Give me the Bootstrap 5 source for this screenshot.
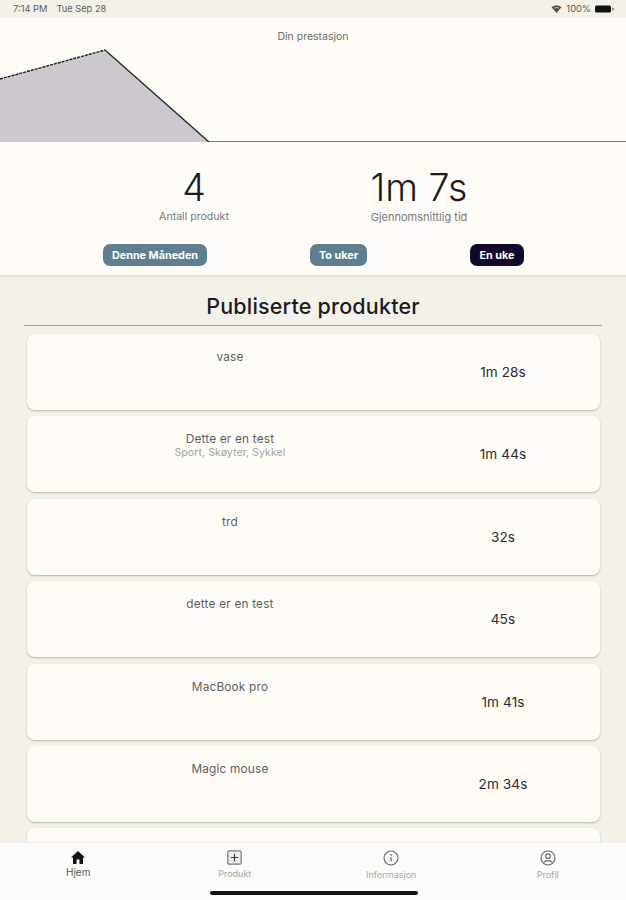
<!DOCTYPE html>
<html lang="no"><head><meta charset="utf-8"><title>Hjem</title>
<link href="https://cdn.jsdelivr.net/npm/bootstrap@5.3.0/dist/css/bootstrap.min.css" rel="stylesheet">
<style>
html,body{height:900px;overflow:hidden}
body{background:#f4f1e9;font-family:Inter,"Liberation Sans",sans-serif;color:#1c1b1f}
.app{height:900px}
.statusbar{height:18px;background:#f4f1e9;padding:0 12px 0 13px;font-size:9.3px;color:#5a5a58}
.statusgap{margin-left:9px}
.hero{background:#fffcf8;height:258px;border-bottom:1px solid #d9d6cf;box-shadow:0 1px 2px rgba(0,0,0,.08)}
.charttitle{font-size:10.5px;color:#6b6a68;text-align:center;position:absolute;left:0;right:0;top:11px}
.chartbox{height:124px}
.chartbox svg{display:block}
.stats{padding-top:28px;height:100px}
.statcol{width:210px;text-align:center}
.statnum{font-size:37.5px;line-height:36px;font-weight:300;color:#1c1b1f}
.statlab{font-size:10.6px;line-height:14px;color:#77767a;margin-top:4px}
.statwide{font-size:11px}
.filters{padding:0 102px 0 103px;margin-top:2px}
.pill{font-size:10.8px;font-weight:700;line-height:21px;height:22px;border-radius:7px;color:#fff;background:#5f7f90;padding:0;border:0;text-align:center}
.pw1{width:104px}.pw2{width:57px}.pw3{width:54px}
.pill.active{background:#15062b}
.heading{font-size:21.5px;font-weight:500;letter-spacing:.2px;text-align:center;line-height:28px;margin:16px 24px 0;padding-bottom:3px;border-bottom:1px solid #a39d8e;height:34px;color:#1c1b1f}
.listing{padding:8px 26px 0 27px;gap:6.4px;overflow:hidden;flex:1 1 0;min-height:0}
.prod{flex:0 0 76px;background:#fffcf8;border-radius:8px;box-shadow:0 1px 2px rgba(70,65,50,.35);padding-top:16px}
.prodmain{width:406px;text-align:center}
.prodname{font-size:11.8px;line-height:14px;color:#5f5e5c;letter-spacing:.2px}
.prodsub{font-size:10.5px;line-height:12px;color:#a3a2a0;letter-spacing:.1px;margin-top:1px}
.prodtime{width:140px;text-align:center;font-size:13.6px;color:#2b2a2c;letter-spacing:.1px;margin-top:15px;line-height:14px}
.tabbar{height:58px;background:#fbfbfa;flex:0 0 58px;position:relative;border-top:1px solid #f0efec}
.tab{width:156.5px;text-align:center;font-size:9px;color:#a8a7a6;padding-top:7px;line-height:12px}
.tab svg{display:block;margin:0 auto 3px}
.tab.on{color:#55545a;font-size:10px}
.tab.on svg{margin-bottom:1px}
.homebar{position:absolute;left:210px;top:48px;width:208px;height:4px;background:#111;border-radius:2px}
</style></head>
<body>
<div class="app d-flex flex-column">
<div class="statusbar d-flex justify-content-between align-items-center flex-shrink-0">
<div class="d-flex"><span>7:14 PM</span><span class="statusgap">Tue Sep 28</span></div>
<div class="d-flex align-items-center gap-1">
<svg width="11" height="8" viewBox="0 0 11 8"><path d="M.5 2.3C3.5-.2 7.5-.2 10.5 2.3L5.5 7.8Z" fill="#4a4a48"/><path d="M3 3.2c1.5-.8 3.5-.8 5 0" stroke="#f4f1e9" stroke-width=".8" fill="none"/></svg>
<span>100%</span>
<svg width="19" height="8" viewBox="0 0 19 8"><rect x="0" y="0.5" width="16" height="7" rx="1.5" fill="#111"/><rect x="17" y="2.5" width="1.5" height="3" rx=".7" fill="#777"/></svg>
</div></div>
<div class="hero flex-shrink-0">
<div class="chartbox position-relative">
<svg width="626" height="124" viewBox="0 0 626 124"><path d="M0 61 L105 32 L209 124 L0 124Z" fill="#cdc8cd"/><path d="M0 61 L105 32" stroke="#1d1a22" stroke-width="1.4" stroke-dasharray="3 1" fill="none"/><path d="M105 32 L209 124" stroke="#2a272c" stroke-width="1.4" fill="none"/><path d="M209 124 L626 124" stroke="#7c7a78" stroke-width="2" fill="none"/></svg>
<div class="charttitle">Din prestasjon</div>
</div>
<div class="stats d-flex">
<div class="statcol" style="margin-left:89px"><div class="statnum">4</div><div class="statlab">Antall produkt</div></div>
<div class="statcol" style="margin-left:15px"><div class="statnum">1m 7s</div><div class="statlab statwide">Gjennomsnittlig tid</div></div>
</div>
<div class="filters d-flex justify-content-between">
<button class="pill pw1">Denne Måneden</button><button class="pill pw2">To uker</button><button class="pill pw3 active">En uke</button>
</div>
</div>
<div class="heading flex-shrink-0">Publiserte produkter</div>
<div class="listing d-flex flex-column">
<div class="prod d-flex"><div class="prodmain"><div class="prodname">vase</div></div><div class="prodtime">1m 28s</div></div>
<div class="prod d-flex"><div class="prodmain"><div class="prodname">Dette er en test</div><div class="prodsub">Sport, Skøyter, Sykkel</div></div><div class="prodtime">1m 44s</div></div>
<div class="prod d-flex"><div class="prodmain"><div class="prodname">trd</div></div><div class="prodtime">32s</div></div>
<div class="prod d-flex"><div class="prodmain"><div class="prodname">dette er en test</div></div><div class="prodtime">45s</div></div>
<div class="prod d-flex"><div class="prodmain"><div class="prodname">MacBook pro</div></div><div class="prodtime">1m 41s</div></div>
<div class="prod d-flex"><div class="prodmain"><div class="prodname">Magic mouse</div></div><div class="prodtime">2m 34s</div></div>
<div class="prod d-flex"></div>
</div>
<div class="tabbar d-flex">
<div class="tab on"><svg width="16" height="15" viewBox="0 0 16 15"><path d="M8 1 15 7.5H13V14H9.5V9.5H6.5V14H3V7.5H1Z" fill="#14101c"/></svg>Hjem</div>
<div class="tab"><svg width="15" height="15" viewBox="0 0 15 15"><rect x=".8" y=".8" width="13.4" height="13.4" rx="1.5" fill="#eeeded" stroke="#77767a" stroke-width="1.2"/><path d="M7.5 3.8v7.4M3.8 7.5h7.4" stroke="#3e3d40" stroke-width="1.2"/></svg>Produkt</div>
<div class="tab"><svg width="16" height="16" viewBox="0 0 16 16"><circle cx="8" cy="8" r="7" fill="none" stroke="#66656a" stroke-width="1.1"/><path d="M8 7v4.5" stroke="#66656a" stroke-width="1.3"/><circle cx="8" cy="4.8" r=".9" fill="#66656a"/></svg>Informasjon</div>
<div class="tab"><svg width="16" height="16" viewBox="0 0 16 16"><circle cx="8" cy="8" r="7" fill="none" stroke="#66656a" stroke-width="1.1"/><circle cx="8" cy="6.2" r="2.3" fill="none" stroke="#66656a" stroke-width="1.1"/><path d="M3.5 12.5c2-2.5 7-2.5 9 0" fill="none" stroke="#66656a" stroke-width="1.1"/></svg>Profil</div>
<div class="homebar"></div>
</div>
</div>
<script src="https://cdn.jsdelivr.net/npm/bootstrap@5.3.0/dist/js/bootstrap.bundle.min.js"></script>
</body></html>
